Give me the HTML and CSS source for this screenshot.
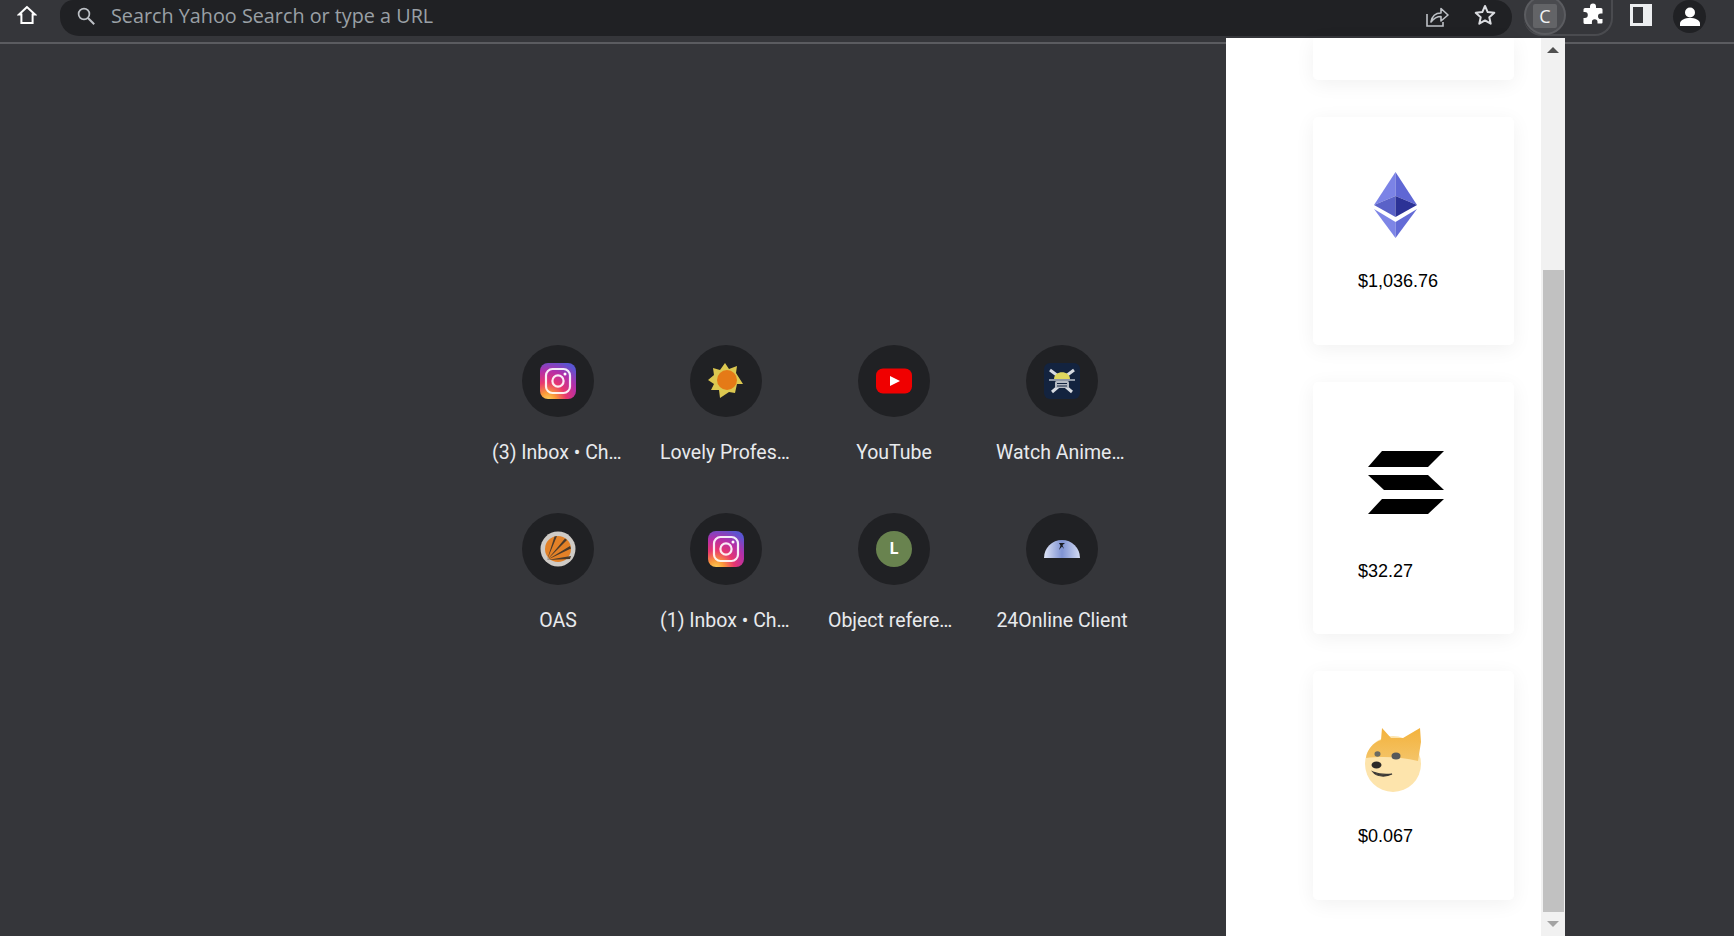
FILE: index.html
```html
<!DOCTYPE html>
<html lang="en">
<head>
<meta charset="utf-8">
<title>New Tab</title>
<link rel="stylesheet" href="styles.css">
</head>
<body>
<svg class="defs" width="0" height="0">
  <defs>
    <radialGradient id="ig" cx="0.22" cy="1.05" r="1.15">
      <stop offset="0" stop-color="#fdd75c"/>
      <stop offset="0.2" stop-color="#fb9a3a"/>
      <stop offset="0.45" stop-color="#e8366f"/>
      <stop offset="0.72" stop-color="#b52fa8"/>
      <stop offset="1" stop-color="#5a55d2"/>
    </radialGradient>
    <symbol id="insta" viewBox="0 0 36 36">
      <rect width="36" height="36" rx="8" fill="url(#ig)"/>
      <rect x="6" y="6" width="24" height="24" rx="6.5" fill="none" stroke="#fff" stroke-opacity=".9" stroke-width="2.2"/>
      <circle cx="18" cy="18" r="5.6" fill="none" stroke="#fff" stroke-opacity=".9" stroke-width="2.2"/>
      <circle cx="25" cy="11" r="1.5" fill="#fff"/>
    </symbol>
  </defs>
</svg>

<header class="toolbar">
  <svg class="home" viewBox="0 0 20 20" width="20" height="20"><path d="M10 2 2 9.5h2.4V18h11.2V9.5H18L10 2Z" fill="none" stroke="#fff" stroke-width="2" stroke-linejoin="miter"/></svg>
  <div class="omnibox">
    <svg class="search" viewBox="0 0 20 20" width="20" height="20"><circle cx="8" cy="8" r="5.4" fill="none" stroke="#bdc1c6" stroke-width="1.7"/><path d="m12 12 6.2 6.2" stroke="#bdc1c6" stroke-width="2"/></svg>
    <span class="placeholder">Search Yahoo Search or type a URL</span>
    <svg class="share" viewBox="0 0 24 22" width="24" height="22"><path d="M2 9v12h16v-4" fill="none" stroke="#bdc1c6" stroke-width="1.6"/><path d="M6 17c1-6 5-9 10-9V3.500l7 6.500-7 6v-4.500c-4 0-7 1.500-10 5.500Z" fill="none" stroke="#bdc1c6" stroke-width="1.6" stroke-linejoin="round"/></svg>
    <svg class="star" viewBox="0 0 24 24" width="24" height="24"><path d="m12 3 2.700 6.100 6.600.7-5 4.400 1.400 6.500L12 17.400l-5.700 3.300 1.400-6.500-5-4.400 6.600-.7L12 3Z" fill="none" stroke="#dadce0" stroke-width="2" stroke-linejoin="round"/></svg>
  </div>
  <div class="ext-pill">
    <div class="ext-current"><span class="ext-square">C</span></div>
    <svg class="puzzle" viewBox="0 0 22 22" width="22" height="22"><path d="M8 3.500a3 3 0 0 1 6 0V5h5a1.500 1.500 0 0 1 1.500 1.500v4h-1.700a2.800 2.800 0 0 0 0 5.600h1.700v3.400a1 1 0 0 1-1 1h-4v-1.500a2.800 2.800 0 0 0-5.600 0V21H3a1.500 1.500 0 0 1-1.500-1.500V15h1.300a3 3 0 0 0 0-6H1.500V6.500A1.500 1.500 0 0 1 3 5h5V3.500Z" fill="#fff"/></svg>
  </div>
  <svg class="panel" viewBox="0 0 22 22" width="22" height="22"><path d="M0 0h22v22H0V0Zm3 3v16h10V3H3Z" fill="#eceef0" fill-rule="evenodd"/></svg>
  <div class="profile"><svg viewBox="0 0 24 24" width="24" height="24"><circle cx="12" cy="7.500" r="5" fill="#fff"/><path d="M2 21v-2.500c0-3.500 5-5.500 10-5.500s10 2 10 5.500V21H2Z" fill="#fff"/></svg></div>
</header>

<main class="tiles">
  <a class="tile"><span class="tile-icon"><svg class="fav" width="36" height="36"><use href="#insta"/></svg></span><span class="tile-label cut">(3) Inbox • Ch…</span></a>
  <a class="tile"><span class="tile-icon"><svg class="fav" viewBox="0 0 36 36" width="36" height="36"><polygon points="17,0 21,6 29,3 28,10 35,21 29,21 27,30 21,29 12,35 11,27 3,27 6,21 0,17 6,12 5,5 12,7" fill="#dcc850"/><circle cx="19" cy="17" r="10" fill="#e57a17"/></svg></span><span class="tile-label cut">Lovely Profes…</span></a>
  <a class="tile"><span class="tile-icon"><svg class="fav" viewBox="0 0 36 26" width="36" height="26"><rect width="36" height="25" y="0.500" rx="7" fill="#f00000"/><polygon points="14,8 24,13 14,18" fill="#fff"/></svg></span><span class="tile-label">YouTube</span></a>
  <a class="tile"><span class="tile-icon"><svg class="fav" viewBox="0 0 36 36" width="36" height="36"><rect width="36" height="36" rx="6" fill="#13233f"/><path d="M6 7l8 6M30 7l-8 6M8 29l7-6M28 29l-7-6" stroke="#d7dbe2" stroke-width="3"/><path d="M10 16c0-9 16-9 16 0Z" fill="#dfd75e"/><path d="M5 17h26" stroke="#aeb4bf" stroke-width="1.600"/><rect x="11" y="18" width="14" height="7" rx="1.500" fill="#b5bac3"/><path d="M13 20.500h10M13 23h10" stroke="#13233f" stroke-width="1"/></svg></span><span class="tile-label cut">Watch Anime…</span></a>
  <a class="tile"><span class="tile-icon"><svg class="fav" viewBox="0 0 36 36" width="36" height="36"><circle cx="18" cy="18" r="17.500" fill="#cfcbc6"/><circle cx="18" cy="18" r="13" fill="#e38127"/><path d="M7 29 14.500 5.500l2.500-.5ZM7 29 25 7.500l2 1.500ZM7 29l23-14 1 2.500ZM7 29l24-4-1 3Z" fill="#4a3a2b"/></svg></span><span class="tile-label">OAS</span></a>
  <a class="tile"><span class="tile-icon"><svg class="fav" width="36" height="36"><use href="#insta"/></svg></span><span class="tile-label cut">(1) Inbox • Ch…</span></a>
  <a class="tile"><span class="tile-icon"><span class="letter">L</span></span><span class="tile-label cut">Object refere…</span></a>
  <a class="tile"><span class="tile-icon"><svg class="fav" viewBox="0 0 36 18" width="36" height="18"><defs><linearGradient id="dome" x1="0" x2="1"><stop offset="0" stop-color="#dfe5f7"/><stop offset="0.5" stop-color="#7f93d3"/><stop offset="1" stop-color="#d3dbf3"/></linearGradient></defs><path d="M0 18a18 18 0 0 1 36 0H0Z" fill="url(#dome)"/><path d="M15 3h6l-2.500 2 1.500 4-2-2.500L15 10l1.500-4.500Z" fill="#1a1c22"/></svg></span><span class="tile-label">24Online Client</span></a>
</main>

<aside class="popup">
  <div class="popup-body">
    <div class="card card-cut"></div>
    <div class="card card-eth">
      <svg class="coin" viewBox="0 0 43 66" width="43" height="66">
        <polygon points="21.500,0 0,33 21.500,24" fill="#7b83e6"/>
        <polygon points="21.500,0 43,33 21.500,24" fill="#5f67d4"/>
        <polygon points="0,33 21.500,24 21.500,45" fill="#5a62c8"/>
        <polygon points="43,33 21.500,24 21.500,45" fill="#2c3296"/>
        <polygon points="0,37 21.500,50 21.500,66" fill="#7d85e6"/>
        <polygon points="43,37 21.500,50 21.500,66" fill="#636bd6"/>
      </svg>
      <p class="price">$1,036.76</p>
    </div>
    <div class="card card-sol">
      <svg class="coin" viewBox="0 0 76 64" width="76" height="64">
        <polygon points="14,0 76,0 60,16 0,16" fill="#000"/>
        <polygon points="0,24 60,24 76,39 16,39" fill="#000"/>
        <polygon points="14,48 76,48 60,63 0,63" fill="#000"/>
      </svg>
      <p class="price">$32.27</p>
    </div>
    <div class="card card-doge">
      <svg class="coin" viewBox="0 0 56 64" width="56" height="64">
        <defs><linearGradient id="fur" x1="0" y1="0" x2="0" y2="1"><stop offset="0" stop-color="#f3b23c"/><stop offset="1" stop-color="#f4c468"/></linearGradient></defs>
        <circle cx="28" cy="36" r="28" fill="#fde4ac"/>
        <path d="M17 0l9 10h12L55 0l1 14-3 19c-16-4-36-5-52-3 1-9 8-16 15-18Z" fill="url(#fur)"/>
        <ellipse cx="12.500" cy="26" rx="3" ry="2.800" fill="#6a6a62"/>
        <ellipse cx="31" cy="28" rx="4.500" ry="3.500" fill="#55585a"/>
        <ellipse cx="11.500" cy="37" rx="5" ry="3.500" fill="#2d2a28"/>
        <path d="M8 44c5 2 11 3 19 2-6 3-15 3-19-2Z" fill="#3a3835" stroke="#3a3835" stroke-width="1.200"/>
      </svg>
      <p class="price">$0.067</p>
    </div>
  </div>
  <div class="scrollbar">
    <span class="arrow-up"></span>
    <span class="track"><span class="thumb"></span></span>
    <span class="arrow-down"></span>
  </div>
</aside>
</body>
</html>
```

FILE: styles.css
```css
* { box-sizing: border-box; }
html, body { height: 100%; }
body {
  margin: 0;
  background: #35363a;
  overflow: hidden;
  position: relative;
  font-family: Roboto, "Liberation Sans", sans-serif;
}
.defs { position: absolute; }

.toolbar {
  display: flex;
  align-items: flex-start;
  height: 44px;
  border-bottom: 2px solid #5b5c60;
  background: #35363a;
}
.home { flex: none; margin: 5px 0 0 17px; }
.omnibox {
  flex: none;
  display: flex;
  align-items: center;
  width: 1452px;
  height: 36px;
  margin-left: 23px;
  padding-left: 16px;
  background: #202124;
  border-radius: 14px 18px 20px 20px;
}
.search { flex: none; margin-top: -4px; }
.placeholder {
  margin: -5px 0 0 15px;
  font-family: "Open Sans", sans-serif;
  font-size: 19.800px;
  color: #9aa0a6;
  white-space: nowrap;
}
.share { flex: none; margin: -4px 0 0 auto; }
.star { flex: none; margin: -6px 15px 0 24px; }
.ext-pill {
  flex: none;
  display: flex;
  align-items: center;
  width: 89px;
  height: 36px;
  margin-left: 12px;
  border: 2px solid #4a4b4f;
  border-top: 0;
  border-left: 0;
  border-radius: 0 0 18px 18px;
}
.ext-current {
  flex: none;
  display: flex;
  align-items: flex-start;
  justify-content: center;
  width: 42px;
  height: 40px;
  margin-top: -4px;
  padding-top: 7px;
  background: #4a4b4f;
  border: 2px solid #5b5c60;
  border-radius: 50%;
}
.ext-square {
  width: 24px;
  height: 24px;
  background: #636467;
  border-radius: 2px;
  color: #f1f3f4;
  font-family: "Open Sans", sans-serif;
  font-size: 18px;
  line-height: 24px;
  text-align: center;
}
.puzzle { flex: none; margin: -6px 0 0 16px; }
.panel { flex: none; margin: 4px 0 0 17px; }
.profile {
  flex: none;
  display: flex;
  align-items: center;
  justify-content: center;
  width: 33px;
  height: 33px;
  margin: 0 0 0 21px;
  background: #202124;
  border-radius: 50%;
}

.tiles {
  display: grid;
  grid-template-columns: repeat(4, 168px);
  grid-auto-rows: 168px;
  margin: 301px 0 0 474px;
  width: 672px;
}
.tile { display: flex; flex-direction: column; align-items: center; }
.tile-icon {
  display: flex;
  align-items: center;
  justify-content: center;
  width: 72px;
  height: 72px;
  background: #202124;
  border-radius: 50%;
}
.fav { filter: blur(.35px); }
.tile-label {
  width: 132px;
  margin-top: 24px;
  font-size: 19.500px;
  line-height: 24px;
  color: #e8eaed;
  text-align: center;
  white-space: nowrap;
}
.cut { text-align: left; }
.letter {
  width: 36px;
  height: 36px;
  background: #69834f;
  border-radius: 50%;
  color: #fff;
  font-weight: 700;
  font-size: 16px;
  line-height: 36px;
  text-align: center;
}

.popup {
  position: absolute;
  left: 1226px;
  top: 38px;
  bottom: 0;
  width: 339px;
  display: flex;
  background: #fff;
}
.popup-body {
  flex: 1;
  display: flex;
  flex-direction: column;
  gap: 37px;
  padding-left: 87px;
}
.card {
  flex: none;
  width: 201px;
  padding-left: 45px;
  background: #fff;
  border-radius: 5px;
  box-shadow: 0 4px 20px rgba(0, 0, 0, .06);
}
.coin { display: block; }
.price {
  margin: 0;
  font-family: "Liberation Sans", Arial, sans-serif;
  font-size: 18px;
  line-height: 21px;
  color: #000;
}
.card-cut { height: 42px; border-radius: 0 0 5px 5px; }
.card-eth { height: 228px; padding-top: 55px; }
.card-eth .coin { margin-left: 16px; }
.card-eth .price { margin-top: 33px; }
.card-sol { height: 252px; padding-top: 69px; }
.card-sol .coin { margin-left: 10px; }
.card-sol .price { margin-top: 46px; }
.card-doge { height: 229px; padding-top: 57px; }
.card-doge .coin { margin-left: 7px; }
.card-doge .price { margin-top: 34px; }

.scrollbar {
  flex: none;
  width: 24px;
  display: flex;
  flex-direction: column;
  align-items: center;
  background: #f1f1f1;
}
.arrow-up, .arrow-down {
  flex: none;
  width: 0;
  height: 0;
  margin: 9px 0;
  border-left: 6px solid transparent;
  border-right: 6px solid transparent;
}
.arrow-up { border-bottom: 6px solid #505050; }
.arrow-down { border-top: 6px solid #a3a3a3; }
.track { flex: 1; width: 100%; padding: 208px 1px 0 2px; }
.thumb { display: block; height: 100%; background: #c1c1c1; }
```
